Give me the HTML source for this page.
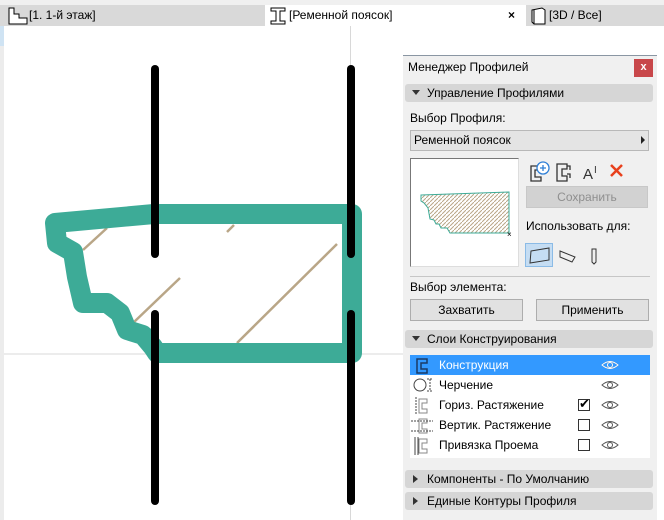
<!DOCTYPE html>
<html><head><meta charset="utf-8"><style>
*{margin:0;padding:0;box-sizing:border-box}
body{width:664px;height:520px;overflow:hidden;background:#fff;font-family:"Liberation Sans",sans-serif;font-size:12px;color:#000;position:relative}
.abs{position:absolute}
.tab{position:absolute;top:5px;height:21px;line-height:21px;font-size:12px}
.hdr{position:absolute;left:405px;width:248px;height:18px;background:#d6d6d6;border-radius:3px;line-height:18px;padding-left:22px;font-size:12px}
.hdr:before{content:"";position:absolute;left:7px;top:6px;border-left:4px solid transparent;border-right:4px solid transparent;border-top:5px solid #333}
.hdr.c:before{left:8px;top:5px;border-top:4px solid transparent;border-bottom:4px solid transparent;border-left:5px solid #333;border-right:0}
.btn{position:absolute;height:22px;background:#e1e1e1;border:1px solid #adadad;text-align:center;line-height:20px}
.row{position:absolute;left:410px;width:240px;height:20px;line-height:20px}
.row span{position:absolute;left:29px}
.cb{position:absolute;left:578px;width:12px;height:12px;border:1px solid #333;background:#fff}
</style></head><body>
<div class="abs" style="left:0;top:0;width:664px;height:5px;background:#f0f0f0"></div>
<div class="abs" style="left:0;top:5px;width:664px;height:21px;background:#d9d9d9"></div>
<div class="abs" style="left:265px;top:5px;width:261px;height:21px;background:#fff"></div>
<svg class="abs" style="left:8px;top:7px" width="20" height="18"><path d="M1 17V1h5v6h5v4h8v6z" fill="#fff" stroke="#000"/></svg>
<div class="tab" style="left:29px">[1. 1-й этаж]</div>
<svg class="abs" style="left:270px;top:7px" width="16" height="18"><path d="M1 1h14v3h-5v10h5v3H1v-3h5V4H1z" fill="#fff" stroke="#000"/></svg>
<div class="tab" style="left:289px">[Ременной поясок]</div>
<div class="tab" style="left:508px;font-weight:bold">×</div>
<svg class="abs" style="left:530px;top:7px" width="16" height="18"><path d="M2 3l10-2 3 2v14l-11 0-2-2z M4 3v14" fill="#fff" stroke="#000"/></svg>
<div class="tab" style="left:549px">[3D / Все]</div>
<div class="abs" style="left:0;top:26px;width:4px;height:494px;background:#ececec"></div>
<div class="abs" style="left:0;top:26px;width:4px;height:20px;background:#cfe3f3"></div>

<svg class="abs" style="left:0;top:0" width="664" height="520">
<line x1="4" y1="354" x2="403" y2="354" stroke="#d8d8d8"/>
<line x1="350.5" y1="26" x2="350.5" y2="520" stroke="#d8d8d8"/>
<g stroke="#b9a687" stroke-width="2.5">
<line x1="83" y1="250" x2="107" y2="228"/><line x1="227" y1="232" x2="234" y2="225"/>
<line x1="133" y1="323" x2="180" y2="278"/><line x1="237" y1="343" x2="337" y2="244"/></g>
<path d="M154 214L352 214L352 353L157 353L153 347L143 335L127 330L120 313L107 303L83 303L80 290L77 277L73 252L57 243L55 223L154 214" fill="none" stroke="#3dab97" stroke-width="20" stroke-linejoin="round" stroke-linecap="round"/>
<g stroke="#000" stroke-width="8" stroke-linecap="round">
<line x1="155" y1="69" x2="155" y2="254"/><line x1="155" y1="314" x2="155" y2="501"/>
<line x1="351" y1="69" x2="351" y2="254"/><line x1="351" y1="314" x2="351" y2="501"/></g>
</svg>

<div class="abs" style="left:403px;top:55px;width:254px;height:465px;background:#f0f0f0;border-top:1px solid #8a96a3"></div>
<div class="abs" style="left:408px;top:60px;font-size:12px">Менеджер Профилей</div>
<div class="abs" style="left:634px;top:59px;width:19px;height:18px;background:#c8474a;color:#fff;text-align:center;line-height:17px;font-size:11px;font-weight:bold">x</div>
<div class="hdr" style="top:84px">Управление Профилями</div>
<div class="abs" style="left:410px;top:111px">Выбор Профиля:</div>
<div class="abs" style="left:410px;top:130px;width:239px;height:21px;background:#e4e4e4;border:1px solid #b8b8b8;line-height:19px;padding-left:3px">Ременной поясок</div>
<div class="abs" style="left:641px;top:136px;border-top:4px solid transparent;border-bottom:4px solid transparent;border-left:4px solid #222"></div>
<div class="abs" style="left:410px;top:158px;width:109px;height:109px;background:#fff;border:1px solid #777;border-right-color:#ddd;border-bottom-color:#ddd"></div>
<svg class="abs" style="left:410px;top:158px" width="109" height="109">
<defs><pattern id="h" width="4" height="4" patternUnits="userSpaceOnUse"><path d="M0 4L4 0" stroke="#b9a687" stroke-width="1"/></pattern></defs>
<path d="M11 37L99 34V75H40L37 70H31L29 66H26L24 62L20 61L18 50L14 45L11 43Z" fill="url(#h)" stroke="#3dab97"/>
<text x="97" y="79" font-size="8">×</text></svg>
<svg class="abs" style="left:528px;top:160px" width="100" height="22" fill="none" stroke="#333" stroke-width="1.3">
<path d="M3 6h9v4H7v7h6v4H3z"/><circle cx="15" cy="8" r="6" stroke="#2f7fd6" fill="#fff"/><path d="M15 5v6M12 8h6" stroke="#2f7fd6"/>
<path d="M29 4h10v5h-5v7h5v5H29z M39 6h3v4 M39 14h3v4"/>
<text x="55" y="19" font-size="15" fill="#333" stroke="none" font-family="Liberation Sans">A</text><text x="66" y="13" font-size="10" fill="#333" stroke="none">I</text>
<path d="M83 5l11 11M94 5L83 16" stroke="#e8401c" stroke-width="2.5"/></svg>
<div class="btn" style="left:526px;top:186px;width:122px;color:#8f8f8f;background:#d2d2d2;border-color:#c8c8c8">Сохранить</div>
<div class="abs" style="left:526px;top:219px">Использовать для:</div>
<div class="abs" style="left:525px;top:243px;width:28px;height:24px;background:#c5ddf3;border:1px solid #8bbbe6"></div>
<svg class="abs" style="left:525px;top:243px" width="90" height="24" fill="none" stroke="#333">
<path d="M6 8l18-3v12L5 20z"/><path d="M35 8l15 6-3 5-12-5z"/><path d="M67 6h4v13l-2 2-2-2z"/></svg>
<div class="abs" style="left:410px;top:276px;width:240px;height:1px;background:#c6c6c6"></div>
<div class="abs" style="left:410px;top:280px">Выбор элемента:</div>
<div class="btn" style="left:410px;top:299px;width:113px">Захватить</div>
<div class="btn" style="left:536px;top:299px;width:113px">Применить</div>
<div class="hdr" style="top:330px">Слои Конструирования</div>
<div class="abs" style="left:410px;top:355px;width:240px;height:103px;background:#fff"></div>
<div class="row" style="top:355px;background:#3399ff;color:#fff"><span>Конструкция</span></div>
<div class="row" style="top:375px"><span>Черчение</span></div>
<div class="row" style="top:395px"><span>Гориз. Растяжение</span></div>
<div class="row" style="top:415px"><span>Вертик. Растяжение</span></div>
<div class="row" style="top:435px"><span>Привязка Проема</span></div>
<svg class="abs" style="left:410px;top:355px" width="30" height="103" fill="none" stroke="#444">
<path d="M7 4h10v4h-6v6h6v4H7z" stroke="#1a3a66" stroke-width="1.5"/>
<circle cx="10" cy="30" r="6"/><path d="M17 24h5M17 36h5M20 24v12" stroke-dasharray="2 1"/>
<path d="M9 44h8v4h-5v6h5v4H9z" stroke="#888"/><path d="M6 42v18" stroke-dasharray="2 1"/>
<path d="M9 64h8v4h-5v6h5v4H9z" stroke="#888"/><path d="M1 66h22M1 76h22" stroke-dasharray="2 1"/>
<path d="M9 84h8v4h-5v6h5v4H9z" stroke="#888"/><path d="M5 82v18M8 82v18"/></svg>
<div class="cb" style="top:399px"></div><div class="abs" style="left:579px;top:396px;font-size:13px">✔</div>
<div class="cb" style="top:419px"></div><div class="cb" style="top:439px"></div>
<svg class="abs" style="left:600px;top:355px" width="20" height="100" fill="none" stroke="#555">
<g id="e"><path d="M2 10q8-7 16 0q-8 7-16 0z"/><circle cx="10" cy="10" r="2.5"/></g>
<use href="#e" y="20"/><use href="#e" y="40"/><use href="#e" y="60"/><use href="#e" y="80"/>
<path d="M2 10q8-7 16 0q-8 7-16 0z" stroke="#fff"/><circle cx="10" cy="10" r="2.5" stroke="#fff"/></svg>
<div class="hdr c" style="top:470px">Компоненты - По Умолчанию</div>
<div class="hdr c" style="top:492px">Единые Контуры Профиля</div>
</body></html>
